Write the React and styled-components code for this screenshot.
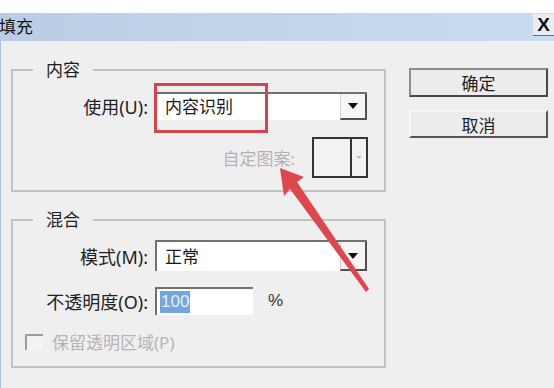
import React from 'react'
import styled, { createGlobalStyle } from 'styled-components'

const GlobalStyle = createGlobalStyle`
  html, body {
    margin: 0;
    padding: 0;
    background: #fff;
  }
  body {
    font-family: "Noto Sans", "Noto Sans CJK SC", sans-serif;
  }
`

const Page = styled.div`
  position: relative;
  width: 554px;
  height: 388px;
  overflow: hidden;
  padding-top: 13px;
  box-sizing: border-box;
  display: flex;
  flex-direction: column;
  background: #fff;
`

const Dialog = styled.div`
  flex: 1;
  display: flex;
  flex-direction: column;
  background: #efefef;
`

const TitleBar = styled.div`
  height: 28px;
  display: flex;
  align-items: flex-start;
  justify-content: space-between;
  background: linear-gradient(to right, #bacde4, #c9dcf0);
`

const Title = styled.span`
  font-size: 17px;
  line-height: 28px;
  color: #151515;
  margin-left: -1px;
`

const CloseButton = styled.div`
  width: 21px;
  height: 21px;
  margin-top: 1px;
  display: flex;
  align-items: center;
  justify-content: center;
  background: #e9eef4;
  border-bottom: 1px solid #6a6a6a;
  font-family: "Liberation Sans", Arial, sans-serif;
  font-weight: 700;
  font-size: 19px;
  color: #111;
`

const Body = styled.div`
  flex: 1;
  display: flex;
  align-items: flex-start;
  padding: 19px 6px 0 10px;
  border-left: 1px solid #aac2df;
`

const LeftColumn = styled.div`
  width: 375px;
  display: flex;
  flex-direction: column;
`

const Group = styled.fieldset`
  margin: 0;
  padding: ${p => p.$pt}px 16px ${p => p.$pb}px 0;
  min-width: 0;
  border: 2px solid #c3c3c3;
  & + & {
    margin-top: 18px;
  }
`

const GroupTitle = styled.legend`
  margin-left: 20px;
  padding: 0 13px;
  font-size: 17px;
  line-height: 20px;
  color: #1e1e1e;
`

const FieldRow = styled.div`
  display: flex;
  align-items: center;
  margin-top: ${p => p.$mt || 0}px;
`

const Label = styled.span`
  width: 135px;
  flex: none;
  text-align: right;
  font-size: 18px;
  color: #222;
  margin-right: 7px;
  white-space: nowrap;
`

const Combo = styled.div`
  width: 212px;
  height: ${p => p.$h}px;
  box-sizing: border-box;
  display: flex;
  background: #fff;
  border-top: 2px solid #707070;
  border-left: 2px solid #707070;
`

const ComboText = styled.span`
  flex: 1;
  padding-left: 8px;
  font-size: 17px;
  line-height: ${p => p.$h - 2}px;
  color: #1a1a1a;
`

const ComboArrow = styled.div`
  width: 24px;
  display: flex;
  align-items: center;
  justify-content: center;
  background: #f6f6f6;
  border-left: 1px solid #d4d4d4;
  border-right: 2px solid #505050;
  border-bottom: 2px solid #505050;
  &::after {
    content: '';
    border-left: 5px solid transparent;
    border-right: 5px solid transparent;
    border-top: 6px solid #111;
  }
`

const PatternRow = styled.div`
  display: flex;
  align-items: center;
  justify-content: flex-end;
  margin-top: 17px;
`

const MutedLabel = styled.span`
  font-size: 17px;
  color: #b3b3b3;
  margin-right: 17px;
  padding-top: 8px;
  align-self: flex-start;
`

const Swatch = styled.div`
  width: 56px;
  height: 41px;
  box-sizing: border-box;
  display: flex;
  border: 2px solid #333;
  background: #f2f2f2;
`

const SwatchFace = styled.div`
  flex: 1;
  border-right: 2px solid #333;
`

const SwatchArrow = styled.div`
  width: 14px;
  display: flex;
  align-items: center;
  justify-content: center;
  &::after {
    content: '';
    border-left: 3px solid transparent;
    border-right: 3px solid transparent;
    border-top: 3px solid #bdbdbd;
  }
`

const NumberInput = styled.div`
  width: 98px;
  height: 28px;
  box-sizing: border-box;
  display: flex;
  align-items: center;
  padding-left: 3px;
  background: #fff;
  border-top: 2px solid #707070;
  border-left: 2px solid #707070;
`

const Selected = styled.span`
  font-family: "Liberation Sans", Arial, sans-serif;
  font-size: 17px;
  line-height: 22px;
  padding: 0 1px;
  background: #74a6de;
  color: #e9f1fb;
`

const Unit = styled.span`
  margin-left: 15px;
  font-family: "Liberation Sans", Arial, sans-serif;
  font-size: 17px;
  color: #333;
`

const CheckRow = styled.label`
  display: flex;
  align-items: center;
  margin-top: 14px;
  padding-left: 12px;
`

const CheckBox = styled.span`
  width: 18px;
  height: 16px;
  box-sizing: border-box;
  border-top: 2px solid #9d9d9d;
  border-left: 2px solid #9d9d9d;
  background: #f3f3f3;
  margin-right: 9px;
`

const CheckText = styled.span`
  font-size: 17px;
  color: #b5b5b5;
`

const RightColumn = styled.div`
  margin-left: 23px;
  padding-top: 8px;
  display: flex;
  flex-direction: column;
`

const Button = styled.button`
  width: 139px;
  height: ${p => (p.$primary ? 29 : 28)}px;
  padding: 0;
  font-family: "Noto Sans CJK SC", sans-serif;
  font-size: 17px;
  color: #1e1e1e;
  background: #ececec;
  border: 2px solid;
  border-color: ${p => (p.$primary ? '#8c8c8c #474747 #474747 #8c8c8c' : '#f7f7f7 #555 #555 #f7f7f7')};
  & + & {
    margin-top: 13px;
  }
`

const Highlight = styled.div`
  position: absolute;
  left: 154px;
  top: 83px;
  width: 114px;
  height: 50px;
  box-sizing: border-box;
  border: 3px solid #d4454e;
  pointer-events: none;
`

const Arrow = styled.svg`
  position: absolute;
  left: 0;
  top: 0;
  pointer-events: none;
`

export default function App() {
  return (
    <>
      <GlobalStyle />
      <Page>
        <Dialog>
          <TitleBar>
            <Title>填充</Title>
            <CloseButton>X</CloseButton>
          </TitleBar>
          <Body>
            <LeftColumn>
              <Group $pt={12} $pb={12}>
                <GroupTitle>内容</GroupTitle>
                <FieldRow>
                  <Label>使用(U):</Label>
                  <Combo $h={28}>
                    <ComboText $h={28}>内容识别</ComboText>
                    <ComboArrow />
                  </Combo>
                </FieldRow>
                <PatternRow>
                  <MutedLabel>自定图案:</MutedLabel>
                  <Swatch>
                    <SwatchFace />
                    <SwatchArrow />
                  </Swatch>
                </PatternRow>
              </Group>
              <Group $pt={10} $pb={12}>
                <GroupTitle>混合</GroupTitle>
                <FieldRow>
                  <Label>模式(M):</Label>
                  <Combo $h={31}>
                    <ComboText $h={31}>正常</ComboText>
                    <ComboArrow />
                  </Combo>
                </FieldRow>
                <FieldRow $mt={16}>
                  <Label>不透明度(O):</Label>
                  <NumberInput>
                    <Selected>100</Selected>
                  </NumberInput>
                  <Unit>%</Unit>
                </FieldRow>
                <CheckRow>
                  <CheckBox />
                  <CheckText>保留透明区域(P)</CheckText>
                </CheckRow>
              </Group>
            </LeftColumn>
            <RightColumn>
              <Button $primary>确定</Button>
              <Button>取消</Button>
            </RightColumn>
          </Body>
        </Dialog>
        <Highlight />
        <Arrow width="554" height="388" viewBox="0 0 554 388">
          <polygon
            points="280,168 304,177 297,182 369,289 366,292 290,189 284,196"
            fill="#e0464d"
          />
        </Arrow>
      </Page>
    </>
  )
}
